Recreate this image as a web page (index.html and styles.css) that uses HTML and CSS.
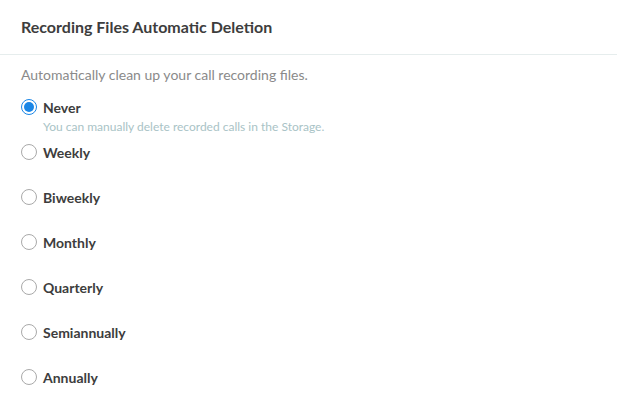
FILE: index.html
```html
<!DOCTYPE html>
<html>
<head>
<meta charset="utf-8">
<link rel="stylesheet" href="styles.css">
</head>
<body>
<div class="panel">
  <div class="header">Recording Files Automatic Deletion</div>
  <div class="body">
    <p class="desc">Automatically clean up your call recording files.</p>
    <div class="options">
      <label class="option">
        <span class="row"><span class="radio checked"></span><span class="label">Never</span></span>
        <span class="hint">You can manually delete recorded calls in the Storage.</span>
      </label>
      <label class="option"><span class="row"><span class="radio"></span><span class="label">Weekly</span></span></label>
      <label class="option"><span class="row"><span class="radio"></span><span class="label">Biweekly</span></span></label>
      <label class="option"><span class="row"><span class="radio"></span><span class="label">Monthly</span></span></label>
      <label class="option"><span class="row"><span class="radio"></span><span class="label">Quarterly</span></span></label>
      <label class="option"><span class="row"><span class="radio"></span><span class="label">Semiannually</span></span></label>
      <label class="option"><span class="row"><span class="radio"></span><span class="label">Annually</span></span></label>
    </div>
  </div>
</div>
</body>
</html>
```
FILE: styles.css
```css
html, body {
  margin: 0;
  padding: 0;
  background: #fff;
}
body {
  font-family: Lato, "Open Sans", sans-serif;
  color: #3a3a3a;
}
.panel {
  width: 617px;
}
.header {
  height: 55px;
  box-sizing: border-box;
  padding: 0 21px 1px;
  display: flex;
  align-items: center;
  font-size: 16px;
  font-weight: 700;
  color: #3d3d3d;
  border-bottom: 1px solid #e6eded;
}
.body {
  padding: 11px 21px 0;
}
.desc {
  margin: 0;
  font-size: 14px;
  line-height: 18px;
  color: #8a8a8a;
}
.options {
  display: flex;
  flex-direction: column;
  margin-top: 12px;
}
.option {
  display: flex;
  flex-direction: column;
  height: 45px;
}
.row {
  display: flex;
  align-items: center;
  height: 22px;
  gap: 6px;
}
.radio {
  width: 14px;
  height: 14px;
  border: 1px solid #a9a9a9;
  border-radius: 50%;
  box-sizing: content-box;
  position: relative;
  flex: none;
}
.radio.checked {
  border: 1px solid #1a86e6;
}
.radio.checked::after {
  content: "";
  position: absolute;
  left: 2px;
  top: 2px;
  width: 10px;
  height: 10px;
  border-radius: 50%;
  background: #1a86e6;
}
.label {
  font-size: 14px;
  font-weight: 700;
  color: #3d3d3d;
}
.hint {
  margin-left: 22px;
  font-size: 12px;
  color: #a9c3c6;
  line-height: 14px;
  margin-top: 2px;
}
```
